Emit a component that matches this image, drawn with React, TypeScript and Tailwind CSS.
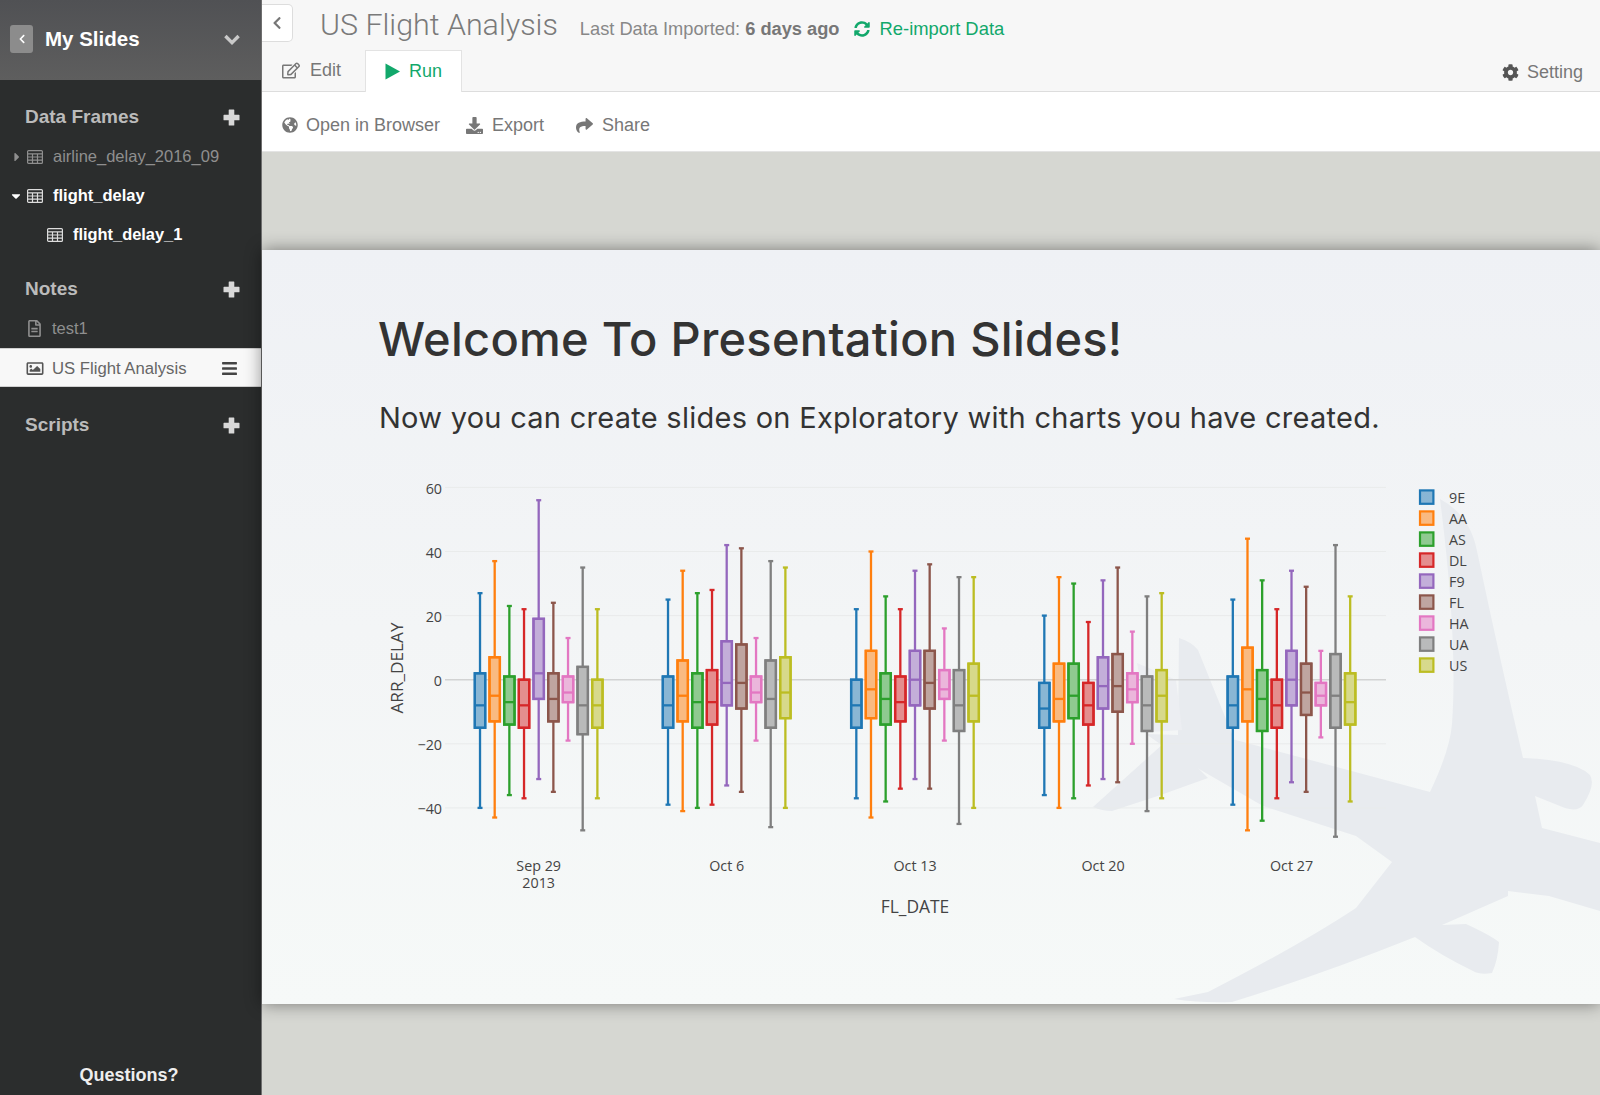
import { FaCaretDown, FaCaretRight, FaChevronLeft, FaCog, FaDownload, FaGlobeAmericas, FaBars, FaRegEdit, FaRegFileAlt, FaRegImage, FaShare, FaSyncAlt } from "react-icons/fa";

// [high, q3, median, q1, low] per carrier, per week
const carriers = [
    { name: "9E", color: "#1f77b4" },
    { name: "AA", color: "#ff7f0e" },
    { name: "AS", color: "#2ca02c" },
    { name: "DL", color: "#d62728" },
    { name: "F9", color: "#9467bd" },
    { name: "FL", color: "#8c564b" },
    { name: "HA", color: "#e377c2" },
    { name: "UA", color: "#7f7f7f" },
    { name: "US", color: "#bcbd22" },
];

const weeks = [
    {
        label: "Sep 29", sub: "2013", x: 538.7, boxes: [
            [27, 2, -8, -15, -40], [37, 7, -5, -13, -43], [23, 1, -7, -14, -36], [22, 0, -8, -15, -37], [56, 19, 2, -6, -31],
            [24, 2, -6, -13, -35], [13, 1, -4, -7, -19], [35, 4, -8, -17, -47], [22, 0, -8, -15, -37],
        ],
    },
    {
        label: "Oct 6", x: 726.7, boxes: [
            [25, 1, -8, -15, -39], [34, 6, -5, -13, -41], [27, 2, -7, -15, -40], [28, 3, -7, -14, -39], [42, 12, -1, -8, -33],
            [41, 11, -1, -9, -35], [13, 1, -4, -7, -19], [37, 6, -6, -15, -46], [35, 7, -4, -12, -40],
        ],
    },
    {
        label: "Oct 13", x: 915, boxes: [
            [22, 0, -8, -15, -37], [40, 9, -3, -12, -43], [26, 2, -6, -14, -38], [22, 1, -7, -13, -34], [34, 9, 0, -8, -31],
            [36, 9, -1, -9, -34], [16, 3, -3, -6, -19], [32, 3, -8, -16, -45], [32, 5, -5, -13, -40],
        ],
    },
    {
        label: "Oct 20", x: 1103, boxes: [
            [20, -1, -9, -15, -36], [32, 5, -6, -13, -40], [30, 5, -5, -12, -37], [18, -1, -8, -14, -33], [31, 7, -2, -9, -31],
            [35, 8, -2, -10, -32], [15, 2, -3, -7, -20], [26, 1, -8, -16, -41], [27, 3, -5, -13, -37],
        ],
    },
    {
        label: "Oct 27", x: 1291.5, boxes: [
            [25, 1, -8, -15, -39], [44, 10, -3, -13, -47], [31, 3, -6, -16, -44], [22, 0, -8, -15, -37], [34, 9, 0, -8, -32],
            [29, 5, -4, -11, -35], [9, -1, -5, -8, -18], [42, 8, -5, -15, -49], [26, 2, -7, -14, -38],
        ],
    },
];

const ticks = [60, 40, 20, 0, -20, -40];
const y = (v: number) => 679.7 - 3.205 * v;
const chartFont = { fontFamily: '"Open Sans", sans-serif' };

function GridIcon({ className }: { className?: string }) {
    return (
        <svg viewBox="0 0 16 14" className={className} fill="none" stroke="currentColor" strokeWidth="1.2">
            <rect x="0.6" y="0.6" width="14.8" height="12.8" rx="1" />
            <path d="M0.6 3.8H15.4M0.6 7H15.4M0.6 10.2H15.4M5.5 3.8V13.4M10.5 3.8V13.4" />
        </svg>
    );
}

function PlusIcon() {
    return (
        <svg viewBox="0 0 17 17" className="w-[17px] h-[17px] text-[#d8d8d8]" fill="currentColor">
            <path d="M6.3 0.5a0.6 0.6 0 0 0-0.6 0.6V5.7H1.1a0.6 0.6 0 0 0-0.6 0.6v4.4a0.6 0.6 0 0 0 0.6 0.6H5.7v4.6a0.6 0.6 0 0 0 0.6 0.6h4.4a0.6 0.6 0 0 0 0.6-0.6V11.3h4.6a0.6 0.6 0 0 0 0.6-0.6V6.3a0.6 0.6 0 0 0-0.6-0.6H11.3V1.1a0.6 0.6 0 0 0-0.6-0.6z" />
        </svg>
    );
}

function SectionTitle({ title }: { title: string }) {
    return (
        <div className="flex items-center justify-between h-[39px] pl-[25px] pr-[21px] text-[19px] font-bold text-[#bbbbbb]">
            <span>{title}</span>
            <PlusIcon />
        </div>
    );
}

function Sidebar() {
    return (
        <div className="flex flex-col w-[262px] h-[1095px] shrink-0 bg-[#2b2d2d] border-r border-[#6f6f6f]" style={{ fontFamily: '"Liberation Sans", sans-serif' }}>
            <div className="flex items-center h-[80px] pl-[10px] pr-[21px] pb-[2px] bg-gradient-to-b from-[#505154] to-[#5e5e5e]">
                <div className="flex items-center justify-center w-[23px] h-[28px] rounded-[3px] bg-[#8c8c8c]">
                    <FaChevronLeft className="w-[10px] h-[10px] text-white" />
                </div>
                <span className="ml-[12px] text-[20.5px] font-bold text-white">My Slides</span>
                <svg viewBox="0 0 16 11" className="ml-auto w-[16px] h-[11px] text-[#c9c9c9]" fill="none" stroke="currentColor" strokeWidth="3.4">
                    <path d="M1.4 2 L8 8.6 L14.6 2" />
                </svg>
            </div>

            <div className="pt-[18px]">
                <SectionTitle title="Data Frames" />
                <div className="flex items-center h-[39px] pl-[13px] text-[16.5px] text-[#8f8f8f]">
                    <FaCaretRight className="w-[8px] h-[14px]" />
                    <GridIcon className="ml-[6px] w-[16px] h-[14px]" />
                    <span className="ml-[10px]">airline_delay_2016_09</span>
                </div>
                <div className="flex items-center h-[39px] pl-[10px] text-[16.5px] font-bold text-white">
                    <FaCaretDown className="w-[12px] h-[14px]" />
                    <GridIcon className="ml-[5px] w-[16px] h-[14px] text-[#dddddd]" />
                    <span className="ml-[10px]">flight_delay</span>
                </div>
                <div className="flex items-center h-[39px] pl-[47px] text-[16.4px] font-bold text-white">
                    <GridIcon className="w-[16px] h-[14px] text-[#dddddd]" />
                    <span className="ml-[10px]">flight_delay_1</span>
                </div>
            </div>

            <div className="pt-[16px]">
                <SectionTitle title="Notes" />
                <div className="flex items-center h-[39px] pl-[27px] text-[16.5px] text-[#8f8f8f]">
                    <FaRegFileAlt className="w-[15px] h-[17px]" />
                    <span className="ml-[10px]">test1</span>
                </div>
                <div className="flex items-center h-[39px] pt-[2px] pl-[26px] pr-[23px] text-[16.7px] text-[#666666] bg-[#f8f8f8] border-y border-[#d0d0d0]">
                    <FaRegImage className="w-[18px] h-[17px] text-[#555555]" />
                    <span className="ml-[8px]">US Flight Analysis</span>
                    <FaBars className="ml-auto w-[17px] h-[17px] text-[#444444]" />
                </div>
            </div>

            <div className="pt-[19px]">
                <SectionTitle title="Scripts" />
            </div>

            <div className="mt-auto pb-[6px] pr-[3px] text-center text-[18px] font-bold text-[#eeeeee]">Questions?</div>
        </div>
    );
}

function TopBar() {
    return (
        <div style={{ fontFamily: '"Liberation Sans", sans-serif' }}>
            <div className="bg-[#f7f7f7] border-b border-[#dddddd]">
                <div className="flex items-center h-[50px]">
                    <div className="flex items-center justify-center self-start mt-[4px] w-[31px] h-[38px] bg-white border border-l-0 border-[#dddddd] rounded-r-[5px]">
                        <FaChevronLeft className="w-[12px] h-[14px] text-[#777777]" />
                    </div>
                    <span className="ml-[27px] mb-[1px] text-[30.4px] font-light text-[#7a7a7a]" style={{ fontFamily: "Roboto, sans-serif" }}>US Flight Analysis</span>
                    <span className="ml-[22px] mt-[8px] text-[18.25px] text-[#888888]">Last Data Imported: <b className="text-[#777777]">6 days ago</b></span>
                    <FaSyncAlt className="ml-[14px] mt-[8px] w-[16px] h-[16px] text-[#12a86b]" />
                    <span className="ml-[10px] mt-[8px] text-[18.4px] text-[#12a86b]">Re-import Data</span>
                </div>
                <div className="flex items-end h-[41px] text-[18px]">
                    <div className="flex items-center h-[41px] pl-[20px] text-[#777777]">
                        <FaRegEdit className="w-[18px] h-[17px]" />
                        <span className="ml-[10px]">Edit</span>
                    </div>
                    <div className="flex items-center ml-[24px] w-[97px] h-[42px] -mb-px pl-[19px] bg-white border border-b-0 border-[#e3e3e3] text-[#12a86b]">
                        <svg viewBox="0 0 15 17" className="w-[15px] h-[17px]" fill="currentColor">
                            <path d="M0.5 0.5 L15 8.5 L0.5 16.5 Z" />
                        </svg>
                        <span className="ml-[9px]">Run</span>
                    </div>
                    <div className="flex items-center ml-auto h-[41px] pt-[3px] pr-[17px] text-[#777777]">
                        <FaCog className="w-[17px] h-[17px] text-[#555555]" />
                        <span className="ml-[8px]">Setting</span>
                    </div>
                </div>
            </div>
            <div className="flex items-center h-[60px] pt-[7px] pl-[20px] bg-white border-b border-[#e4e4e4] text-[18px] text-[#777777]">
                <FaGlobeAmericas className="w-[16px] h-[16px]" />
                <span className="ml-[8px]">Open in Browser</span>
                <FaDownload className="ml-[26px] w-[17px] h-[17px]" />
                <span className="ml-[9px]">Export</span>
                <FaShare className="ml-[31px] w-[19px] h-[17px]" />
                <span className="ml-[8px]">Share</span>
            </div>
        </div>
    );
}

function PlaneBackdrop() {
    return (
        <svg viewBox="262 250 1338 754" className="absolute inset-0 w-full h-full" fill="#e8ebef">
            <path d="M1179 638 Q1192 642 1198 650 L1232 734 L1232 739 L1430 792 Q1450 750 1452 724 Q1458 640 1440 499 Q1470 515 1477 551 Q1500 660 1523 758 Q1575 760 1590 775 Q1596 785 1583 805 Q1578 812 1565 808 L1535 796 L1542 828 L1600 843 L1600 911 L1549 896 L1508 891 L1508 896 L1442 925 L1466 924 Q1490 935 1499 942 Q1498 960 1492 973 Q1480 975 1473 971 Q1440 955 1415 937 Q1320 975 1232 1002 Q1200 1003 1174 999 L1208 992 Q1300 945 1356 908 L1392 862 L1356 836 L1263 806 L1180 758 L1146 734 L1178 735 Z" />
            <path d="M1137 663 L1176 680 L1182 730 L1150 732 Z" fill="#eceef2" />
            <path d="M1163 744 L1093 807 Q1102 811 1112 811 Q1160 796 1208 778 L1180 750 Z" />
        </svg>
    );
}

function BoxChart() {
    return (
        <svg viewBox="262 470 1338 470" className="relative block w-[1338px] h-[470px]" style={chartFont}>
            {ticks.map((t) => (
                <g key={t}>
                    <line x1="445" x2="1386" y1={y(t)} y2={y(t)} stroke={t === 0 ? "#d2d3d3" : "#e9ebeb"} strokeWidth={t === 0 ? 1.6 : 1} />
                    <text x="442" y={y(t) + 6.2} textAnchor="end" fontSize="14.3" fill="#444444">{t < 0 ? `\u2212${-t}` : t}</text>
                </g>
            ))}
            {weeks.map((week) => (
                <g key={week.label}>
                    {week.boxes.map(([high, q3, med, q1, low], i) => {
                        const cx = week.x + (i - 4) * 14.67;
                        const color = carriers[i].color;
                        return (
                            <g key={carriers[i].name} stroke={color} strokeWidth="2.3">
                                <line x1={cx} x2={cx} y1={y(high)} y2={y(low)} />
                                <line x1={cx - 2.5} x2={cx + 2.5} y1={y(high)} y2={y(high)} />
                                <line x1={cx - 2.5} x2={cx + 2.5} y1={y(low)} y2={y(low)} />
                                <rect x={cx - 5.2} y={y(q3)} width="10.4" height={y(q1) - y(q3)} fill="#f3f5f5" />
                                <rect x={cx - 5.2} y={y(q3)} width="10.4" height={y(q1) - y(q3)} fill={color} fillOpacity="0.5" />
                                <line x1={cx - 5.2} x2={cx + 5.2} y1={y(med)} y2={y(med)} />
                            </g>
                        );
                    })}
                    <text x={week.x} y="870.7" textAnchor="middle" fontSize="14.3" fill="#444444">{week.label}</text>
                    {week.sub && <text x={week.x} y="887.5" textAnchor="middle" fontSize="14.3" fill="#444444">{week.sub}</text>}
                </g>
            ))}
            <text transform="translate(403 668) rotate(-90)" textAnchor="middle" fontSize="17.2" fill="#444444">ARR_DELAY</text>
            <text x="915" y="913" textAnchor="middle" fontSize="17.4" fill="#444444">FL_DATE</text>
            {carriers.map((c, i) => (
                <g key={c.name}>
                    <rect x="1420" y={490.4 + i * 21} width="13.4" height="13.4" stroke={c.color} strokeWidth="2.2" fill={c.color} fillOpacity="0.5" />
                    <text x="1449" y={503 + i * 21} fontSize="14.3" fill="#444444">{c.name}</text>
                </g>
            ))}
        </svg>
    );
}

function Slide() {
    return (
        <div className="relative h-[754px] overflow-hidden bg-gradient-to-b from-[#eff1f5] via-[#f3f5f6] to-[#f6f9f8] shadow-[0_0_16px_rgba(0,0,0,0.45)]">
            <PlaneBackdrop />
            <div className="relative pt-[65px]" style={{ fontFamily: "Inter, sans-serif" }}>
                <h1 className="pl-[116px] text-[47px] leading-[48px] tracking-[0.27px] font-medium text-[#333333]">Welcome To Presentation Slides!</h1>
                <p className="pl-[117px] mt-[37px] text-[29px] leading-[36px] tracking-[0.27px] text-[#333333]">Now you can create slides on Exploratory with charts you have created.</p>
            </div>
            <div className="mt-[34px]">
                <BoxChart />
            </div>
        </div>
    );
}

export default function App() {
    return (
        <div className="flex w-[1600px] h-[1095px] overflow-hidden bg-[#d6d7d2]">
            <Sidebar />
            <div className="flex flex-col flex-1 min-w-0">
                <TopBar />
                <div className="flex-1 pt-[98px]">
                    <Slide />
                </div>
            </div>
        </div>
    );
}
